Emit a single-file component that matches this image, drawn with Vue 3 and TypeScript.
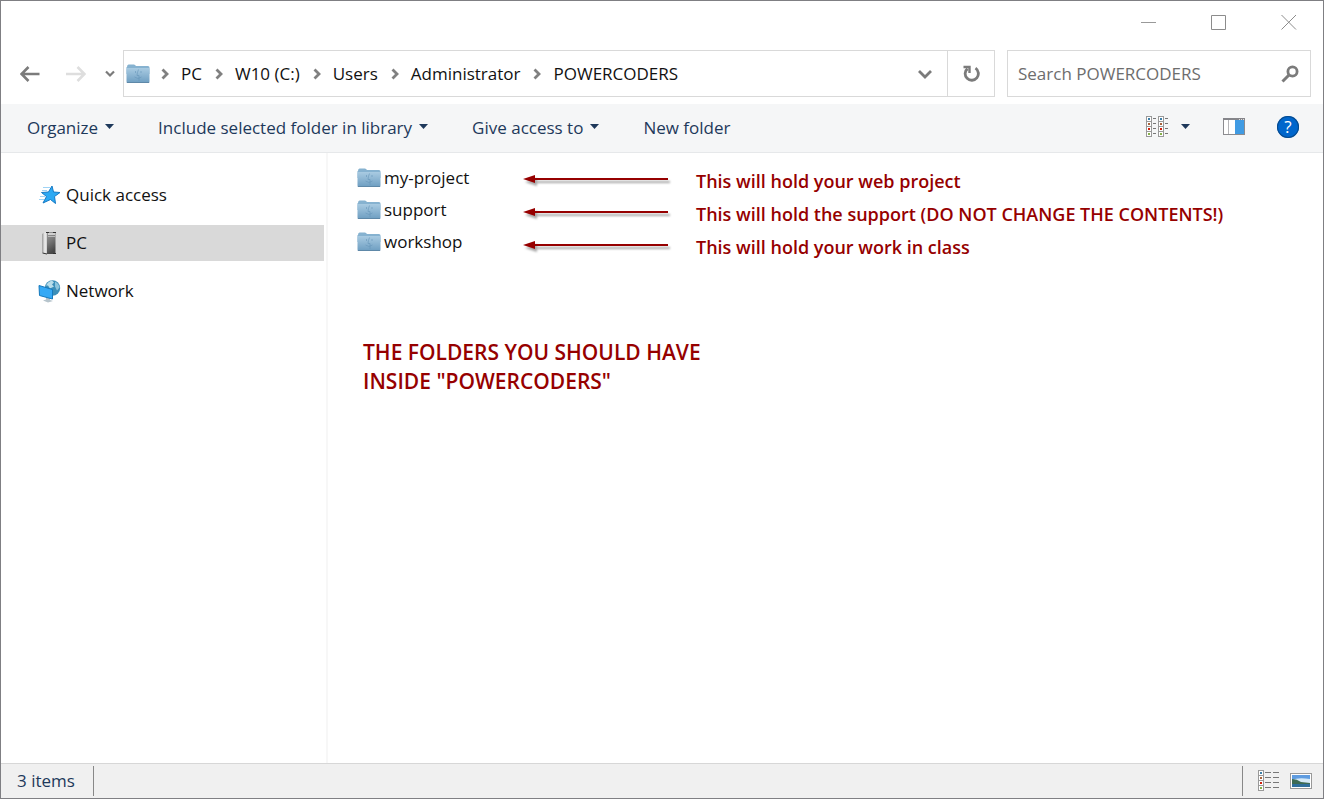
<script setup lang="ts">
import { ref } from 'vue'

interface Place {
  id: 'quick' | 'pc' | 'network'
  label: string
}

const crumbs: string[] = ['PC', 'W10 (C:)', 'Users', 'Administrator', 'POWERCODERS']

const commands: { label: string; menu: boolean }[] = [
  { label: 'Organize', menu: true },
  { label: 'Include selected folder in library', menu: true },
  { label: 'Give access to', menu: true },
  { label: 'New folder', menu: false },
]

const places: Place[] = [
  { id: 'quick', label: 'Quick access' },
  { id: 'pc', label: 'PC' },
  { id: 'network', label: 'Network' },
]

const folders: string[] = ['my-project', 'support', 'workshop']

const notes: string[] = [
  'This will hold your web project',
  'This will hold the support (DO NOT CHANGE THE CONTENTS!)',
  'This will hold your work in class',
]

const dotColors: string[] = ['#3c7fa8', '#a8643c', '#d0200c', '#86b04a']

const selected = ref<Place['id']>('pc')
const query = ref('')
</script>

<template>
  <div class="window">
    <svg class="defs" aria-hidden="true">
      <defs>
        <linearGradient id="folder-front" x1="0" y1="0" x2="0" y2="1">
          <stop offset="0" stop-color="#a9cbe2" />
          <stop offset="1" stop-color="#6f9fc2" />
        </linearGradient>
        <symbol id="folder" viewBox="0 0 24 20">
          <path d="M1 3Q1 .5 2.500 .5H8Q9 .5 10 2H22Q23.500 2 23.500 3.500V10H.5V3Z" fill="#86b2d0" />
          <path d="M.5 5Q.5 4 1.500 4H22.500Q23.500 4 23.500 5V17.500Q23.500 18.500 22.500 18.500H1.500Q.5 18.500 .5 17.500Z" fill="url(#folder-front)" />
          <path d="M.8 18.500H23.200" stroke="#5e88a8" fill="none" />
          <path d="M9.500 7V9M15 7V9M12.500 5.500Q11 9 11 11.500H13V17M8.500 13Q12 16 15.500 13" stroke="#6796b9" stroke-width=".6" fill="none" />
        </symbol>
      </defs>
    </svg>

    <header class="titlebar">
      <button type="button" class="caption" aria-label="Minimize">
        <svg width="16" height="16"><path d="M0 8.500H15" stroke="#999" fill="none" /></svg>
      </button>
      <button type="button" class="caption" aria-label="Maximize">
        <svg width="16" height="16"><path d="M.5 1.500H14.500V15.500H.5Z" stroke="#8c8c8c" fill="none" /></svg>
      </button>
      <button type="button" class="caption" aria-label="Close">
        <svg width="16" height="16"><path d="M.5 1L15 15.500M15 1L.5 15.500" stroke="#8c8c8c" fill="none" /></svg>
      </button>
    </header>

    <div class="navrow">
      <div class="history">
        <button type="button" class="plain" aria-label="Back">
          <svg width="20" height="16"><path d="M19.500 8H2M8.500 1L1.500 8L8.500 15" stroke="#7b7b7b" stroke-width="2.600" fill="none" /></svg>
        </button>
        <button type="button" class="plain" aria-label="Forward">
          <svg width="20" height="16"><path d="M0 8H18M11.500 1L18.500 8L11.500 15" stroke="#dedede" stroke-width="2.600" fill="none" /></svg>
        </button>
        <button type="button" class="plain recent" aria-label="Recent locations">
          <svg width="10" height="8"><path d="M1 1.500L5 5.500L9 1.500" stroke="#7b7b7b" stroke-width="2.200" fill="none" /></svg>
        </button>
      </div>

      <div class="address">
        <svg class="folder" aria-hidden="true"><use href="#folder" /></svg>
        <nav class="crumbs" aria-label="Path">
          <template v-for="crumb in crumbs" :key="crumb">
            <svg width="8" height="12"><path d="M1.500 1.500L6 6L1.500 10.500" stroke="#808080" stroke-width="2.800" fill="none" /></svg>
            <a href="#">{{ crumb }}</a>
          </template>
        </nav>
        <button type="button" class="plain drop" aria-label="Previous locations">
          <svg width="14" height="10"><path d="M1 2L7 8L13 2" stroke="#7b7b7b" stroke-width="2.800" fill="none" /></svg>
        </button>
        <button type="button" class="plain refresh" aria-label="Refresh">
          <svg width="18" height="18" viewBox="0 0 18 18">
            <path d="M13.500 3.200A6.600 6.600 0 1 1 5.500 3.600" stroke="#7b7b7b" stroke-width="2.800" fill="none" />
            <path d="M1.500 2H7.500V8" stroke="#7b7b7b" stroke-width="2.400" fill="none" />
          </svg>
        </button>
      </div>

      <form class="search" @submit.prevent>
        <input v-model="query" type="text" placeholder="Search POWERCODERS" aria-label="Search POWERCODERS" />
        <button type="submit" class="plain" aria-label="Search">
          <svg width="18" height="18">
            <circle cx="11.500" cy="6.500" r="4.600" stroke="#7b7b7b" stroke-width="2.800" fill="none" />
            <path d="M8 10L1.500 16.500" stroke="#7b7b7b" stroke-width="3" fill="none" />
          </svg>
        </button>
      </form>
    </div>

    <div class="toolbar">
      <button v-for="c in commands" :key="c.label" type="button" class="command">
        {{ c.label }}
        <svg v-if="c.menu" width="10" height="8"><path d="M0 0H9L4.500 5Z" fill="#1e395b" /></svg>
      </button>
      <div class="tools">
        <button type="button" class="plain view" aria-label="Change your view">
          <svg width="22" height="22" shape-rendering="crispEdges">
            <g v-for="col in [0, 12]" :key="col">
              <rect :x="col + 0.5" y=".5" width="5" height="20" fill="#fff" stroke="#999" />
              <g v-for="(color, i) in dotColors" :key="color">
                <path :d="`M${col} ${i * 5 + 5.5}h6`" stroke="#999" />
                <rect :x="col + 2" :y="i * 5 + 2" width="2" height="2" :fill="color" />
                <path :d="`M${col + 7} ${i * 5 + 2.5}h3`" stroke="#777" />
              </g>
            </g>
          </svg>
          <svg width="10" height="6"><path d="M0 0H9L4.500 5Z" fill="#1e395b" /></svg>
        </button>
        <button type="button" class="plain" aria-label="Preview pane">
          <svg width="22" height="18" shape-rendering="crispEdges">
            <rect x=".5" y=".5" width="21" height="16" fill="#fff" stroke="#8b8b8f" />
            <path d="M0 1H22" stroke="#85858a" stroke-width="2" />
            <path d="M16 1.500h1M18 1.500h1M20 1.500h1" stroke="#ddd" />
            <path d="M5.500 2V16" stroke="#b5b5b8" />
            <rect x="12" y="2" width="9" height="14" fill="#409be3" />
          </svg>
        </button>
        <button type="button" class="help" aria-label="Help">?</button>
      </div>
    </div>

    <main class="body">
      <nav class="sidebar" aria-label="Places">
        <button
          v-for="p in places"
          :key="p.id"
          type="button"
          class="place"
          :class="{ active: selected === p.id }"
          @click="selected = p.id"
        >
          <svg v-if="p.id === 'quick'" width="24" height="24" viewBox="0 0 24 24">
            <path d="M5 4.500H12M4 7.500H9M2 13.500H7M1 16.500H6" stroke="#9fd3f5" fill="none" />
            <path d="M14 3L15.500 9L22 9.500L16.500 13.500L17.500 20.500L12.500 16.500L5 20L8.500 13.500L3.500 9.500L10.500 9Z" fill="#2ba9f3" stroke="#1579c5" />
          </svg>
          <svg v-else-if="p.id === 'pc'" width="24" height="24" viewBox="0 0 24 24">
            <defs>
              <linearGradient id="tower-side" x1="0" x2="1">
                <stop offset="0" stop-color="#999" />
                <stop offset=".6" stop-color="#f0f0f0" />
                <stop offset="1" stop-color="#ccc" />
              </linearGradient>
              <linearGradient id="tower-front" x1="0" y1="0" x2=".3" y2="1">
                <stop offset="0" stop-color="#999" />
                <stop offset=".5" stop-color="#777" />
                <stop offset="1" stop-color="#484848" />
              </linearGradient>
            </defs>
            <path d="M4 3Q6 1 9 1V23L4 21.500Z" fill="url(#tower-side)" />
            <path d="M9 1H17.500V23H9Z" fill="url(#tower-front)" />
            <path d="M8 1.500H11M15 1.500H18M15 22.500H18M4.500 22L9 23" stroke="#333" fill="none" />
            <path d="M10 3H17" stroke="#e8e8e8" stroke-width="1.500" fill="none" />
            <path d="M10 5.500H17" stroke="#bbb" fill="none" />
          </svg>
          <svg v-else width="24" height="24" viewBox="0 0 24 24">
            <circle cx="14.500" cy="9" r="7.700" fill="#3b8eb8" />
            <path d="M8 6.500Q10 2.500 14 1.500L16 3.500L14 5.500L16 7.500L12 9.500L10 6.500Z" fill="#b8ddea" />
            <path d="M17 2.500Q21 4.500 21.500 8.500L19 11.500L17 7.500Z" fill="#8cc4dc" />
            <path d="M8 18L12 19L12 21L15 22L10 23.500L5 21.500L8 20.500Z" fill="#b6c4cc" />
            <path d="M1 6.500L14.500 10.500V20L1.500 16.500Z" fill="#35a9f5" stroke="#1579bd" />
          </svg>
          {{ p.label }}
        </button>
      </nav>

      <section class="content">
        <div class="listing">
          <ul class="folders">
            <li v-for="name in folders" :key="name">
              <svg class="folder" aria-hidden="true"><use href="#folder" /></svg>
              <span>{{ name }}</span>
            </li>
          </ul>
          <ul class="notes">
            <li v-for="note in notes" :key="note">
              <svg class="arrow" width="150" height="24" aria-hidden="true">
                <path d="M9 10H145" stroke="#960000" stroke-width="2" />
                <path d="M0 10L12 6V14Z" fill="#960000" />
              </svg>
              <span>{{ note }}</span>
            </li>
          </ul>
        </div>
        <p class="caption-note">THE FOLDERS YOU SHOULD HAVE<br />INSIDE "POWERCODERS"</p>
      </section>
    </main>

    <footer class="status">
      <span class="count">3 items</span>
      <div class="modes">
        <button type="button" class="plain" aria-label="Details view">
          <svg width="22" height="22" shape-rendering="crispEdges">
            <rect x=".5" y=".5" width="5" height="20" fill="#fff" stroke="#999" />
            <g v-for="(color, i) in dotColors" :key="color">
              <path :d="`M0 ${i * 5 + 5.5}h6`" stroke="#999" />
              <rect x="2" :y="i * 5 + 2" width="2" height="2" :fill="color" />
              <path :d="`M7 ${i * 5 + 2.5}h6M15 ${i * 5 + 2.5}h6`" stroke="#777" />
            </g>
          </svg>
        </button>
        <button type="button" class="plain" aria-label="Thumbnail view">
          <svg width="22" height="16">
            <rect x=".5" y=".5" width="21" height="15" fill="#fff" stroke="#999" />
            <rect x="2" y="2" width="18" height="12" fill="#5f9ce0" />
            <path d="M2 7Q8 4 20 6V10H2Z" fill="#d5e9f7" />
            <path d="M2 6Q7 6 11 9L20 10V11H2Z" fill="#3e6b54" />
            <path d="M2 11H20V14H2Z" fill="#2f6f9c" />
          </svg>
        </button>
      </div>
    </footer>
  </div>
</template>

<style>
body {
  margin: 0;
}
</style>

<style scoped>
.window {
  box-sizing: border-box;
  display: flex;
  flex-direction: column;
  min-height: 100vh;
  border: 1px solid #7f7f83;
  background: #fff;
  color: #111;
  font: 17px/24px 'Open Sans', 'Noto Sans', sans-serif;
}
.defs {
  position: absolute;
  width: 0;
  height: 0;
}
svg {
  display: block;
  flex: none;
}
button {
  font: inherit;
  color: inherit;
  border: 0;
  padding: 0;
  background: none;
}
.plain {
  display: flex;
  align-items: center;
  justify-content: center;
}
.titlebar {
  display: flex;
  justify-content: flex-end;
  height: 49px;
}
.caption {
  display: flex;
  justify-content: center;
  width: 70px;
  padding: 13px 0 0 1px;
}
.navrow {
  display: flex;
  height: 47px;
  padding: 0 12px 7px 19px;
}
.history {
  display: flex;
  gap: 26px;
  width: 103px;
}
.recent {
  margin-left: -7px;
}
.address {
  display: flex;
  flex: 1;
  align-items: center;
  min-width: 0;
  border: 1px solid #d9d9d9;
  padding-left: 2px;
}
.folder {
  width: 24px;
  height: 20px;
}
.crumbs {
  display: flex;
  flex: 1;
  align-items: center;
  gap: 12px;
  margin-left: 11px;
  white-space: nowrap;
}
.crumbs a {
  margin-right: 1px;
  color: #111;
  text-decoration: none;
}
.drop {
  width: 44px;
  height: 45px;
}
.refresh {
  width: 47px;
  height: 45px;
  border-left: 1px solid #d9d9d9;
}
.search {
  display: flex;
  box-sizing: border-box;
  width: 304px;
  margin-left: 12px;
  padding: 0 11px 0 10px;
  border: 1px solid #d9d9d9;
}
.search input {
  flex: 1;
  min-width: 0;
  padding: 0;
  border: 0;
  outline: 0;
  background: none;
  color: #6d6d6d;
  font: inherit;
}
.search input::placeholder {
  color: #6d6d6d;
  opacity: 1;
}
.toolbar {
  display: flex;
  align-items: center;
  height: 48px;
  padding: 0 24px 0 26px;
  border-bottom: 1px solid #e6e8ea;
  background: #f5f6f7;
  color: #1e395b;
}
.command {
  display: flex;
  align-items: center;
  gap: 7px;
  margin-right: 43px;
  white-space: nowrap;
}
.tools {
  display: flex;
  align-items: center;
  gap: 32px;
  height: 46px;
  margin: 0 0 2px auto;
}
.view {
  gap: 13px;
}
.help {
  width: 22px;
  height: 22px;
  border-radius: 50%;
  background: #0066cc;
  box-shadow: inset 0 0 0 1px #074a8c;
  color: #fff;
  line-height: 22px;
}
.body {
  display: flex;
  flex: 1;
}
.sidebar {
  display: flex;
  flex-direction: column;
  gap: 12px;
  box-sizing: border-box;
  width: 327px;
  padding: 24px 2px 0 0;
  border-right: 2px solid #f7f7f7;
}
.place {
  display: flex;
  align-items: center;
  gap: 4px;
  height: 36px;
  padding-left: 37px;
  color: #111;
}
.place.active {
  background: #d9d9d9;
}
.content {
  flex: 1;
  min-width: 0;
  padding: 9px 0 0 29px;
}
.listing {
  display: flex;
}
ul {
  margin: 0;
  padding: 0;
  list-style: none;
}
.folders {
  width: 166px;
}
.folders li {
  display: flex;
  align-items: center;
  gap: 3px;
  height: 32px;
}
.notes {
  padding-top: 2px;
  color: #960000;
  font-size: 18px;
  font-weight: 600;
}
.notes li {
  display: flex;
  align-items: center;
  gap: 23px;
  height: 33px;
  white-space: nowrap;
}
.arrow {
  filter: drop-shadow(2px 3px 1px rgba(0, 0, 0, 0.35));
}
.caption-note {
  margin: 75px 0 0 6px;
  color: #960000;
  font-size: 21px;
  font-weight: 600;
  line-height: 29px;
}
.status {
  display: flex;
  align-items: center;
  justify-content: space-between;
  box-sizing: border-box;
  height: 35px;
  padding: 0 11px 0 16px;
  border-top: 1px solid #d7d7d7;
  background: #f0f0f0;
  color: #1e395b;
}
.count {
  padding-right: 18px;
  border-right: 1px solid #888;
  line-height: 30px;
}
.modes {
  display: flex;
  align-items: center;
  gap: 10px;
  height: 30px;
  padding-left: 15px;
  border-left: 1px solid #888;
}
</style>
